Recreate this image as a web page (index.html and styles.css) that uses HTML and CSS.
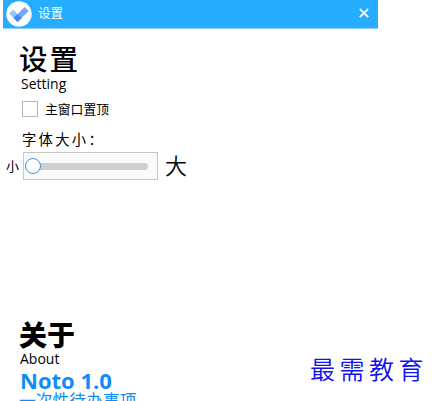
FILE: index.html
```html
<!DOCTYPE html>
<html lang="zh-CN">
<head>
<meta charset="utf-8">
<title>设置</title>
<link rel="stylesheet" href="styles.css">
</head>
<body>
<main class="window">
  <header class="titlebar">
    <svg class="logo" viewBox="0 0 26 26"><circle cx="13" cy="13" r="12.7" fill="#fff"/><path d="M3.2 12.6 7.2 8.6 15.6 17 11.6 21Z" fill="#9cc2fb"/><path d="M7.6 17 18.6 6 22.6 10 11.6 21Z" fill="#74a7f6"/><path d="M7.6 17 11.6 13 15.6 17 11.6 21Z" fill="#4a86ea"/></svg>
    <span class="caption">设置</span>
    <svg class="close" viewBox="0 0 10 10"><path d="M.8.8 9.2 9.2M9.2.8.8 9.2" fill="none" stroke="#fff" stroke-width="1.8"/></svg>
  </header>
  <section class="settings">
    <h1 class="heading">设置</h1>
    <p class="sub">Setting</p>
    <label class="check"><span class="box"></span><span>主窗口置顶</span></label>
    <p class="size-title">字体大小：</p>
    <div class="size-row">
      <span class="small">小</span>
      <div class="slider"><span class="knob"></span><span class="track"></span></div>
      <span class="large">大</span>
    </div>
  </section>
  <section class="about">
    <h2 class="heading bold">关于</h2>
    <p class="sub">About</p>
    <p class="product">Noto 1.0</p>
    <p class="tagline">一次性待办事项</p>
  </section>
</main>
<div class="watermark">最需教育</div>
</body>
</html>
```
FILE: styles.css
```css
* { box-sizing: border-box; }
body {
  margin: 0;
  width: 432px;
  height: 401px;
  overflow: hidden;
  background: #fff;
  color: #000;
  font-family: "Open Sans", "Noto Sans CJK SC", sans-serif;
}
h1, h2, p { margin: 0; white-space: nowrap; }
.window {
  width: 375px;
  height: 401px;
  margin-left: 3px;
  overflow: hidden;
}
.titlebar {
  display: flex;
  align-items: center;
  height: 29px;
  padding: 0 9px 2px 3px;
  background: #27adff;
  border-bottom: 1px solid #8fd3fc;
}
.logo { width: 26px; height: 26px; margin-top: 1px; }
.caption { margin: 2px 0 0 6px; color: #fff; font-size: 12.5px; line-height: 20px; }
.close { width: 10px; height: 10px; margin: 0 0 1px auto; }
.settings { height: 286px; padding: 13px 0 0 16px; }
.heading { font-size: 28.5px; line-height: 35px; font-weight: 500; letter-spacing: 2px; }
.bold { line-height: 38px; padding-top: 1px; font-size: 28px; font-weight: 900; letter-spacing: 0; }
.sub { margin-left: 1px; font-size: 14px; line-height: 14px; }
.about .sub { margin-top: -2px; }
.settings .sub { margin-left: 2px; }
.check {
  display: flex;
  align-items: center;
  gap: 7px;
  height: 18px;
  margin: 9px 0 0 3px;
  font-size: 12.8px;
  line-height: 16px;
}
.check span:last-child { margin-top: -1px; }
.box { width: 16px; height: 16px; border: 1px solid #b5b5b5; }
.size-title { margin: 12px 0 0 3px; font-size: 14.3px; line-height: 20px; letter-spacing: 2.3px; }
.size-row { display: flex; align-items: center; height: 28px; margin: 2px 0 0 -13px; }
.small { width: 17px; margin-top: -2px; font-size: 13px; }
.slider {
  display: flex;
  align-items: center;
  width: 135px;
  height: 28px;
  padding: 0 9px 0 1px;
  border: 1px solid #c6c6c6;
  background: #fafafa;
}
.knob {
  z-index: 1;
  width: 16px;
  height: 16px;
  border: 1px solid #3d91e2;
  border-radius: 50%;
  background: #fff;
}
.track { flex: 1; height: 7px; margin-left: -4px; border-radius: 4px; background: #cfcfcf; }
.large { margin: -2px 0 0 7px; font-size: 22px; font-weight: 350; line-height: 28px; }
.about { padding-left: 16px; }
.product { margin-left: 1px; color: #128cf5; font-size: 22px; font-weight: 700; line-height: 29px; }
.tagline { margin-top: -4px; color: #128cf5; font-size: 16.8px; line-height: 20px; }
.watermark {
  position: absolute;
  left: 310px;
  top: 350px;
  color: #1010f0;
  font-family: "AR PL UKai CN", KaiTi, "Noto Sans CJK SC", sans-serif;
  font-size: 25px;
  font-weight: 350;
  line-height: 36px;
  letter-spacing: 4.5px;
  white-space: nowrap;
}
```
